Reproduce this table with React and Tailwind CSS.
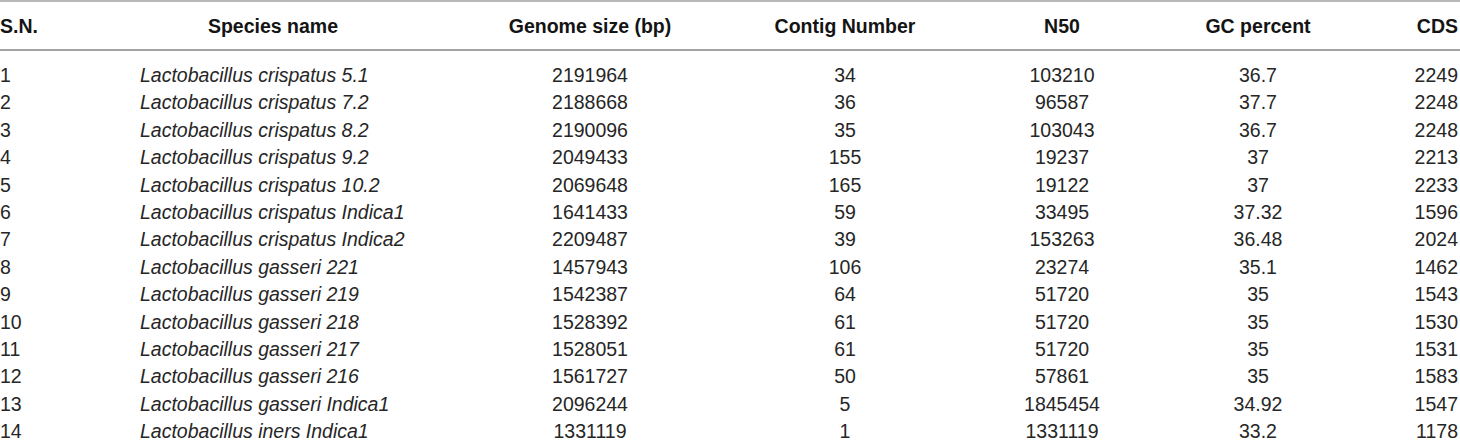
import React from "react";

const rows = [
  ["1", "Lactobacillus crispatus 5.1", "2191964", "34", "103210", "36.7", "2249"],
  ["2", "Lactobacillus crispatus 7.2", "2188668", "36", "96587", "37.7", "2248"],
  ["3", "Lactobacillus crispatus 8.2", "2190096", "35", "103043", "36.7", "2248"],
  ["4", "Lactobacillus crispatus 9.2", "2049433", "155", "19237", "37", "2213"],
  ["5", "Lactobacillus crispatus 10.2", "2069648", "165", "19122", "37", "2233"],
  ["6", "Lactobacillus crispatus Indica1", "1641433", "59", "33495", "37.32", "1596"],
  ["7", "Lactobacillus crispatus Indica2", "2209487", "39", "153263", "36.48", "2024"],
  ["8", "Lactobacillus gasseri 221", "1457943", "106", "23274", "35.1", "1462"],
  ["9", "Lactobacillus gasseri 219", "1542387", "64", "51720", "35", "1543"],
  ["10", "Lactobacillus gasseri 218", "1528392", "61", "51720", "35", "1530"],
  ["11", "Lactobacillus gasseri 217", "1528051", "61", "51720", "35", "1531"],
  ["12", "Lactobacillus gasseri 216", "1561727", "50", "57861", "35", "1583"],
  ["13", "Lactobacillus gasseri Indica1", "2096244", "5", "1845454", "34.92", "1547"],
  ["14", "Lactobacillus iners Indica1", "1331119", "1", "1331119", "33.2", "1178"],
];

const headers = ["S.N.", "Species name", "Genome size (bp)", "Contig Number", "N50", "GC percent", "CDS"];

// same column template for header and body
const gridCols = "grid grid-cols-[140px_266px_368px_142px_292px_100px_1fr]";

const Row = ({ cells, head }) => (
  <div className={`${gridCols} h-[27.4px] leading-[27.4px] whitespace-nowrap`}>
    <div className="flex justify-start">{cells[0]}</div>
    <div className={head ? "flex justify-center" : "flex justify-start italic"}>{cells[1]}</div>
    <div className="flex justify-center">{cells[2]}</div>
    <div className="flex justify-center">{cells[3]}</div>
    <div className="flex justify-center">{cells[4]}</div>
    <div className="flex justify-center">{cells[5]}</div>
    <div className="flex justify-end pr-[2px]">{cells[6]}</div>
  </div>
);

const App = () => {
  return (
    <div className="w-[1460px] h-[442px] overflow-hidden bg-white text-[19.5px] font-['Liberation_Sans',Arial,sans-serif]">
      <div className="h-[2px] bg-[#b8b8b8]" />
      <div className="h-[47px] pt-[11px] font-bold text-[#141414]">
        <Row cells={headers} head />
      </div>
      <div className="h-[2px] bg-[#a3a3a3]" />
      <div className="pt-[11px] text-[#262626]">
        {rows.map((r) => (
          <Row key={r[0]} cells={r} />
        ))}
      </div>
    </div>
  );
};

export default App;
